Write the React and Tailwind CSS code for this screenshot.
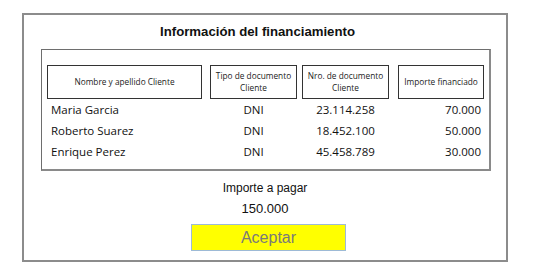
export default function App() {
  const rows = [
    ["Maria Garcia", "DNI", "23.114.258", "70.000"],
    ["Roberto Suarez", "DNI", "18.452.100", "50.000"],
    ["Enrique Perez", "DNI", "45.458.789", "30.000"],
  ];
  const cal = { fontFamily: '"Open Sans", "Noto Sans", sans-serif' };
  return (
    <div className="w-[539px] h-[275px] bg-white overflow-hidden" style={{ fontFamily: '"Liberation Sans", Arial, sans-serif' }}>
      <div className="ml-[22px] mt-[13px] w-[486px] h-[249px] border-2 border-[#8c8c8c] flex flex-col items-start">
        <div className="w-full text-center font-bold text-[13.2px] leading-[18px] text-[#111] mt-[8px] pr-[15px]">
          Información del financiamiento
        </div>
        <div className="ml-[17px] mt-[8px] w-[450px] h-[122px] border border-[#6e6e6e] border-r-2 border-b-2 border-r-[#8a8a8a] border-b-[#8a8a8a]" style={cal}>
          <div className="flex mt-[15px] ml-[5px] text-[8.3px] leading-[12px] text-[#222]">
            <div className="w-[155px] h-[34px] border border-[#333] flex items-center justify-center text-center">Nombre y apellido Cliente</div>
            <div className="ml-[8px] w-[87px] h-[34px] border border-[#333] flex items-center justify-center text-center">Tipo de documento<br />Cliente</div>
            <div className="ml-[5px] w-[87px] h-[34px] border border-[#333] flex items-center justify-center text-center">Nro. de documento<br />Cliente</div>
            <div className="ml-[9px] w-[86px] h-[34px] border border-[#333] flex items-center justify-center text-center">Importe financiado</div>
          </div>
          <div className="ml-[5px] mt-[0px] text-[11.5px] text-[#111]">
            {rows.map((r) => (
              <div key={r[0]} className="flex h-[21px] items-center">
                <div className="w-[155px] pl-[4px]">{r[0]}</div>
                <div className="ml-[8px] w-[87px] text-center">{r[1]}</div>
                <div className="ml-[5px] w-[87px] text-center">{r[2]}</div>
                <div className="ml-[9px] w-[86px] text-right pr-[3px]">{r[3]}</div>
              </div>
            ))}
          </div>
        </div>
        <div className="w-full text-center text-[12px] leading-[16px] text-[#111] mt-[9px]">Importe a pagar</div>
        <div className="w-full text-center text-[13px] leading-[16px] text-[#111] mt-[5px]">150.000</div>
        <div className="ml-[167px] mt-[7px] w-[155px] h-[27px] bg-[#ffff00] border border-[#9dbad6] flex items-center justify-center text-[16px] text-[#7a7a7a]">
          Aceptar
        </div>
      </div>
    </div>
  );
}
